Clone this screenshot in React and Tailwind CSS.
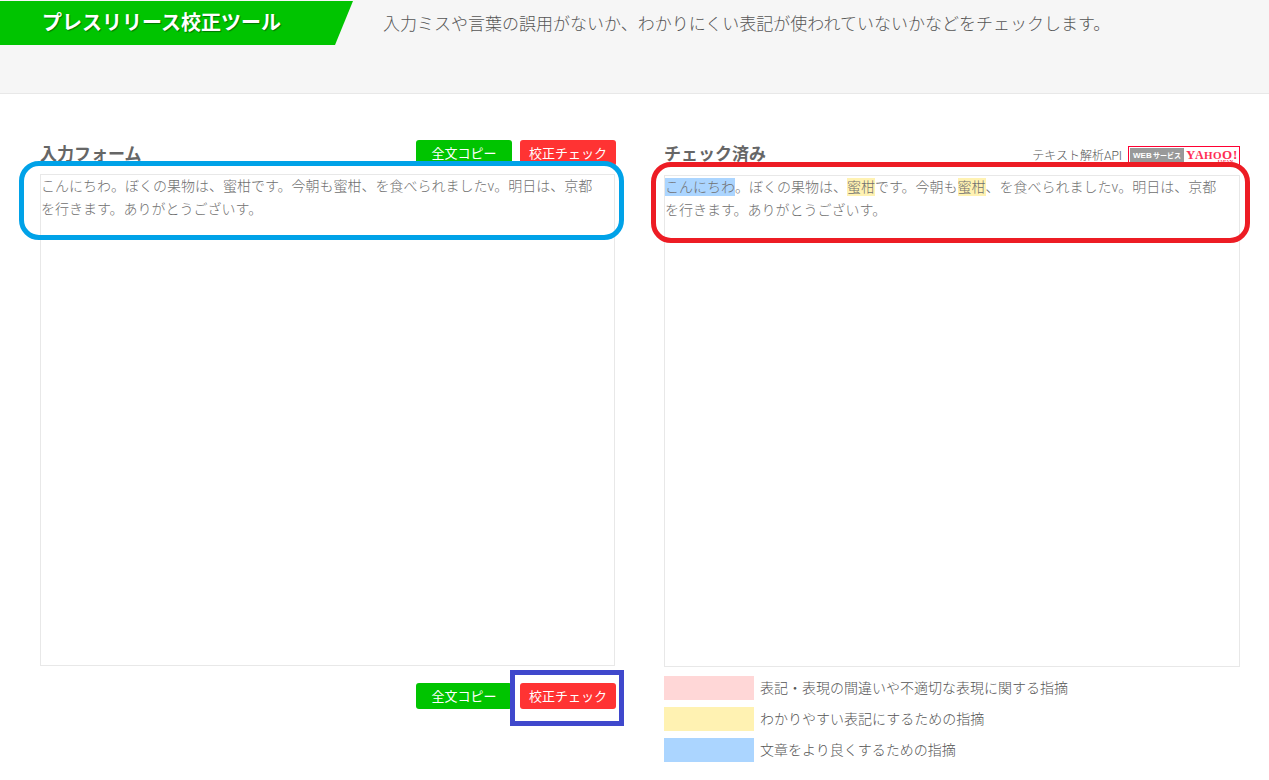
const CopyButton = () => (
  <button type="button" className="block h-[26px] w-24 rounded-[3px] bg-[#00c400] text-[13px] leading-none font-normal text-white">
    全文コピー
  </button>
);

const CheckButton = () => (
  <button type="button" className="block h-[26px] w-24 rounded-[3px] bg-[#ff3333] text-[13px] leading-none font-normal text-white">
    校正チェック
  </button>
);

const INPUT_TEXT =
  "こんにちわ。ぼくの果物は、蜜柑です。今朝も蜜柑、を食べられましたv。明日は、京都を行きます。ありがとうございす。";

const LEGEND = [
  { color: "bg-[#ffd7d7]", label: "表記・表現の間違いや不適切な表現に関する指摘" },
  { color: "bg-[#fff2b2]", label: "わかりやすい表記にするための指摘" },
  { color: "bg-[#abd5ff]", label: "文章をより良くするための指摘" },
];

function YahooBadge() {
  return (
    <a href="#yahoo" className="block h-[21px] w-28 border border-[#ff0033] bg-white">
      <svg viewBox="0 0 110 19" className="block h-[19px] w-[110px]" role="img" aria-label="WEBサービス YAHOO! JAPAN">
        <rect x="1" y="1" width="54" height="14" fill="#999999" />
        <g fill="#ffffff" fontFamily="'Liberation Sans','Noto Sans CJK JP',sans-serif" fontWeight="700">
          <text x="4" y="11" fontSize="8">WEB</text>
          <text x="24" y="11" fontSize="7">サービス</text>
        </g>
        <g fill="#ff2d55" fontFamily="'Liberation Serif',serif" fontWeight="700">
          <text x="57" y="12" fontSize="13">Y</text>
          <text x="66" y="12" fontSize="12">A</text>
          <text x="75" y="12" fontSize="11">H</text>
          <text x="84" y="12" fontSize="11">O</text>
          <text x="93" y="12" fontSize="13">O</text>
          <text x="104" y="12" fontSize="13">!</text>
          <text x="88" y="16" fontSize="5">JAPAN</text>
        </g>
      </svg>
    </a>
  );
}

export default function App() {
  return (
    <div className="min-h-screen bg-white pb-4 font-['Roboto','Noto_Sans_CJK_JP',sans-serif] font-light text-[#555555]" lang="ja">
      <header className="flex h-[94px] items-start border-b border-[#e8e8e8] bg-[#f6f6f6] pt-px">
        <h1 className="flex h-11 w-[353px] shrink-0 items-center bg-[#00c400] pl-[42px] text-[20px] font-bold text-white [clip-path:polygon(0_0,100%_0,335px_100%,0_100%)] [text-shadow:1px_1px_1px_rgba(0,0,0,0.4)]">
          プレスリリース校正ツール
        </h1>
        <p className="flex h-12 items-center pl-[30px] text-[17px]">
          入力ミスや言葉の誤用がないか、わかりにくい表記が使われていないかなどをチェックします。
        </p>
      </header>

      <main className="grid grid-cols-2 gap-12 pt-[46px] pr-[29px] pl-10">
        <section>
          <div className="flex h-[34px] items-start justify-between">
            <h2 className="text-[17px] leading-7 font-bold text-[#666666]">
              <label htmlFor="source">入力フォーム</label>
            </h2>
            <div className="flex gap-2">
              <CopyButton />
              <CheckButton />
            </div>
          </div>
          <div className="relative pr-px">
            <textarea
              id="source"
              className="block h-[492px] w-full resize-none border border-[#e8e8e8] pr-4 text-[14px] leading-[23px] text-[#707070] outline-none"
              defaultValue={INPUT_TEXT}
            />
            <div className="pointer-events-none absolute -top-[13px] -right-2 -left-[21px] h-[79px] rounded-[20px] border-[5px] border-[#00a2e8]" />
          </div>
          <div className="mt-[17px] flex justify-end gap-2">
            <CopyButton />
            <div className="relative">
              <CheckButton />
              <div className="pointer-events-none absolute -top-[13px] -right-2 -bottom-[17px] -left-[10px] border-[5px] border-[#3f48cc]" />
            </div>
          </div>
        </section>

        <section>
          <div className="flex h-[35px] items-start justify-between">
            <h2 className="text-[17px] leading-7 font-bold text-[#666666]">チェック済み</h2>
            <div className="flex items-start gap-[6px] pt-[6px]">
              <span className="text-[12px] leading-5">テキスト解析API</span>
              <YahooBadge />
            </div>
          </div>
          <div className="relative">
            <div className="h-[492px] border border-[#e8e8e8] pr-4 text-[14px] leading-[23px] text-[#707070]">
              <mark className="bg-[#abd5ff] py-px text-inherit">こんにちわ</mark>
              。ぼくの果物は、
              <mark className="bg-[#fff2b2] py-px text-inherit">蜜柑</mark>
              です。今朝も
              <mark className="bg-[#fff2b2] py-px text-inherit">蜜柑</mark>
              、を食べられましたv。明日は、京都を行きます。ありがとうございす。
            </div>
            <div className="pointer-events-none absolute -top-[13px] -right-[10px] -left-[13px] h-[81px] rounded-[20px] border-[5px] border-[#ed1c24]" />
          </div>
          <ul className="mt-[9px] flex flex-col gap-[7px]">
            {LEGEND.map((item) => (
              <li key={item.label} className="flex h-6 items-center gap-[6px] text-[14px]">
                <span className={`h-6 w-[90px] shrink-0 ${item.color}`} />
                {item.label}
              </li>
            ))}
          </ul>
        </section>
      </main>
    </div>
  );
}
